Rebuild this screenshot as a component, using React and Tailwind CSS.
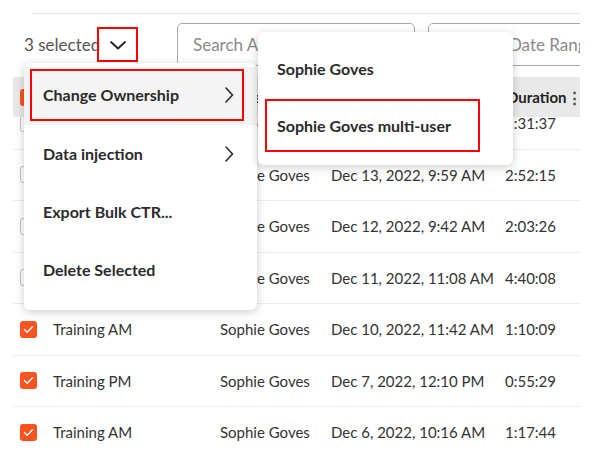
import { useState } from 'react';

const rows = [
  { name: 'Training AM', owner: 'Sophie Goves', date: 'Dec 14, 2022, 10:05 AM', duration: '2:31:37', checked: false },
  { name: 'Training PM', owner: 'Sophie Goves', date: 'Dec 13, 2022, 9:59 AM', duration: '2:52:15', checked: false },
  { name: 'Training AM', owner: 'Sophie Goves', date: 'Dec 12, 2022, 9:42 AM', duration: '2:03:26', checked: false },
  { name: 'Training PM', owner: 'Sophie Goves', date: 'Dec 11, 2022, 11:08 AM', duration: '4:40:08', checked: false },
  { name: 'Training AM', owner: 'Sophie Goves', date: 'Dec 10, 2022, 11:42 AM', duration: '1:10:09', checked: true },
  { name: 'Training PM', owner: 'Sophie Goves', date: 'Dec 7, 2022, 12:10 PM', duration: '0:55:29', checked: true },
  { name: 'Training AM', owner: 'Sophie Goves', date: 'Dec 6, 2022, 10:16 AM', duration: '1:17:44', checked: true },
];

function Checkbox({ checked }) {
  if (checked) {
    return (
      <span className="flex h-[17px] w-[17px] items-center justify-center rounded-[3px] bg-[#f9541f]">
        <svg width="11" height="9" viewBox="0 0 11 9" fill="none">
          <path d="M1.5 4.5 L4.2 7.2 L9.5 1.8" stroke="white" strokeWidth="1.4" strokeLinecap="round" strokeLinejoin="round" />
        </svg>
      </span>
    );
  }
  return <span className="block h-[17px] w-[17px] rounded-[3px] border border-[#c4c4c4] bg-white" />;
}

function ChevronRight() {
  return (
    <svg width="10" height="18" viewBox="0 0 10 18" fill="none">
      <path d="M2 2 L8.5 9 L2 16" stroke="#2b2b2b" strokeWidth="1.6" strokeLinecap="round" strokeLinejoin="round" />
    </svg>
  );
}

export default function App() {
  const [open] = useState(true);

  return (
    <div className="relative h-[453px] w-[592px] overflow-hidden bg-white font-['Lato',sans-serif]">
      <div className="ml-[32px] mr-[12px] mt-[13px] border-t border-[#e3e3e3]" />

      <div className="ml-[13px] w-[567px] overflow-hidden">
        {/* toolbar */}
        <div className="mt-[9px] flex h-[43px] items-center">
          <div className="flex w-[164px] shrink-0 items-center">
            <span className="w-[84px] whitespace-nowrap pl-[11px] text-[17px] text-[#555]">3 selected</span>
            <button className="flex h-[35px] w-[41px] items-center justify-center border-2 border-[#ff0000]">
              <svg width="18" height="10" viewBox="0 0 18 10" fill="none">
                <path d="M2 2 L9 8.5 L16 2" stroke="#222" strokeWidth="1.8" strokeLinecap="round" strokeLinejoin="round" />
              </svg>
            </button>
          </div>
          <div className="flex h-[43px] w-[238px] shrink-0 items-center rounded-[5px] border border-[#a9a9a9] pl-[15px] text-[17px] text-[#8a8a8a]">
            Search All
          </div>
          <div className="ml-[13px] flex h-[43px] w-[200px] shrink-0 items-center whitespace-nowrap rounded-[5px] border border-[#a9a9a9] pl-[15px] text-[17px] text-[#8a8a8a]">
            Filter by Date Range
          </div>
        </div>

        {/* header */}
        <div className="mt-[11px] grid h-[40px] grid-cols-[40px_167px_111px_174px_1fr] items-center bg-[#e9e9e9] text-[15px] font-bold text-[#222]">
          <div className="pl-[7px]">
            <span className="flex h-[17px] w-[17px] items-center justify-center rounded-[3px] bg-[#f9541f]">
              <span className="h-[2px] w-[9px] bg-white" />
            </span>
          </div>
          <div>Name</div>
          <div>Owner</div>
          <div>Date</div>
          <div className="flex items-center justify-between pl-[2px]">
            <span>Duration</span>
            <span className="text-[#444]">⋮</span>
          </div>
        </div>

        {/* body */}
        <div className="h-[336px] overflow-hidden">
          <div className="-mt-[19px]">
            {rows.map((r, i) => (
              <div key={i} className="grid h-[51.5px] grid-cols-[40px_167px_111px_174px_1fr] items-center border-b border-[#eeeeee] text-[15px] text-[#333]">
                <div className="pl-[7px]">
                  <Checkbox checked={r.checked} />
                </div>
                <div className="whitespace-nowrap">{r.name}</div>
                <div className="whitespace-nowrap">{r.owner}</div>
                <div className="whitespace-nowrap">{r.date}</div>
                <div>{r.duration}</div>
              </div>
            ))}
          </div>
        </div>
      </div>

      {open && (
        <>
          {/* bulk actions menu */}
          <div className="absolute left-[24px] top-[63px] h-[247px] w-[233px] rounded-[6px] bg-white pt-[4px] text-[16px] font-bold text-[#2b2b2b] shadow-[0_2px_10px_rgba(0,0,0,0.2)]">
            <div className="h-[58px] bg-[#f4f4f4] pl-[6px] pr-[13px] pt-[2px]">
              <div className="flex h-[52px] items-center justify-between border-2 border-[#ff0000] pl-[11px] pr-[8px]">
                <span>Change Ownership</span>
                <ChevronRight />
              </div>
            </div>
            <div className="flex h-[58px] items-center justify-between pl-[19px] pr-[23px]">
              <span>Data injection</span>
              <ChevronRight />
            </div>
            <div className="flex h-[58px] items-center pl-[19px]">Export Bulk CTR...</div>
            <div className="flex h-[58px] items-center pl-[19px]">Delete Selected</div>
          </div>

          {/* ownership submenu */}
          <div className="absolute left-[258px] top-[32px] h-[133px] w-[255px] rounded-[6px] bg-white pt-[8px] text-[16px] font-bold text-[#2b2b2b] shadow-[0_2px_10px_rgba(0,0,0,0.2)]">
            <div className="flex h-[57px] items-center pl-[19px]">Sophie Goves</div>
            <div className="px-[7px] pt-[2px]">
              <div className="flex h-[53px] w-[215px] items-center border-2 border-[#ff0000] pl-[10px]">
                Sophie Goves multi-user
              </div>
            </div>
          </div>
        </>
      )}
    </div>
  );
}
